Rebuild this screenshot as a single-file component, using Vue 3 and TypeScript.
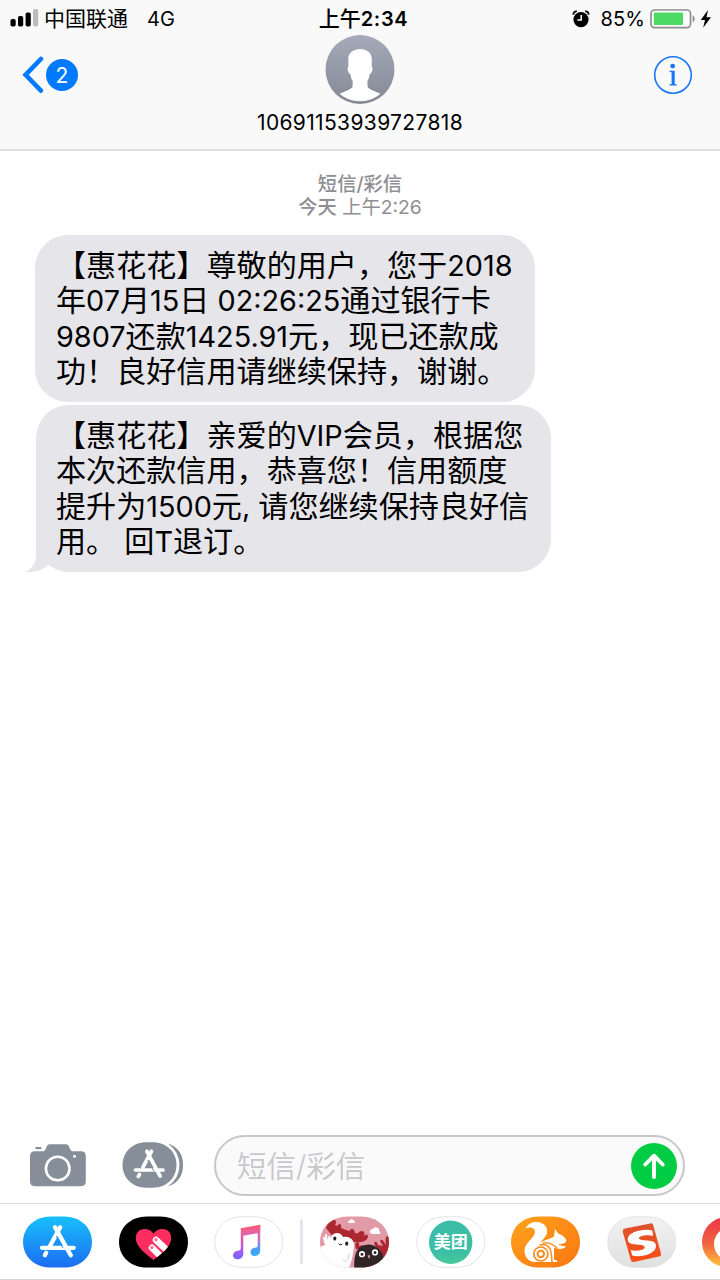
<script setup lang="ts">
interface Run { t: string; n?: boolean }
interface Message { id: number; tail: boolean; lines: Run[][] }

const messages: Message[] = [
  {
    id: 1,
    tail: false,
    lines: [
      [{ t: '【惠花花】尊敬的用户，您于' }, { t: '2018', n: true }],
      [{ t: '年' }, { t: '07', n: true }, { t: '月' }, { t: '15', n: true }, { t: '日' }, { t: ' 02:26:25', n: true }, { t: '通过银行卡' }],
      [{ t: '9807', n: true }, { t: '还款' }, { t: '1425.91', n: true }, { t: '元，现已还款成' }],
      [{ t: '功！良好信用请继续保持，谢谢。' }],
    ],
  },
  {
    id: 2,
    tail: true,
    lines: [
      [{ t: '【惠花花】亲爱的' }, { t: 'VIP', n: true }, { t: '会员，根据您' }],
      [{ t: '本次还款信用，恭喜您！信用额度' }],
      [{ t: '提升为' }, { t: '1500', n: true }, { t: '元' }, { t: ', ', n: true }, { t: '请您继续保持良好信' }],
      [{ t: '用。' }, { t: ' ', n: true }, { t: '回' }, { t: 'T', n: true }, { t: '退订。' }],
    ],
  },
]

const pill = 'M28 .4H41C58 .4 69 12 69 26S58 51.600 41 51.600H28C11 51.600 0 40 0 26S11 .4 28 .4z'
const rim = 'M28 .8H41C57.500 .8 68.700 12.500 68.700 26S57.500 51.300 41 51.300H28C12 51.300 .8 39.500 .8 26S12 .8 28 .8z'
</script>

<template>
  <main class="screen">
    <header class="header">
      <div class="status">
        <div class="status-left">
          <svg class="signal" width="29" height="18" viewBox="0 0 29 18">
            <rect x="0.5" y="10" width="5.2" height="7.5" rx="1.8" />
            <rect x="8" y="7" width="5.2" height="10.5" rx="1.8" />
            <rect x="15.6" y="3.5" width="5.2" height="14" rx="1.8" />
            <rect x="23" y="0" width="5.2" height="17.5" rx="1.8" fill="#bcbcbc" />
          </svg>
          <span class="carrier">中国联通</span>
          <span class="network">4G</span>
        </div>
        <div class="clock"><span class="clock-zh">上午</span>2:34</div>
        <div class="status-right">
          <svg width="18" height="18" viewBox="0 0 18 18">
            <circle cx="9" cy="9.6" r="7.6" />
            <path d="M1.2 4.7Q1.5 1.5 4.8 1.1M13.2 1.1Q16.5 1.5 16.8 4.7" fill="none" stroke="#000" stroke-width="1.7" />
            <path d="M9.2 5v5H5.4" fill="none" stroke="#fff" stroke-width="1.5" />
          </svg>
          <span class="percent">85%</span>
          <svg class="battery" width="46" height="20" viewBox="0 0 46 20">
            <rect x="1" y="1" width="39.5" height="17.6" rx="3.5" fill="#fff" stroke="#8e8e8e" stroke-width="1.7" />
            <rect x="3.8" y="3.6" width="29.2" height="12.4" rx="1" fill="#4cd964" />
            <path d="M42.6 6.3q2.2 1 2.2 3.5t-2.2 3.5z" fill="#8e8e8e" />
          </svg>
          <svg class="bolt" width="12" height="18" viewBox="0 0 12 18">
            <path d="M8 0 .8 10H5L3.2 17.8 11 7.2H6.5z" />
          </svg>
        </div>
      </div>
      <div class="nav">
        <div class="back">
          <svg width="23" height="38" viewBox="0 0 23 38"><path d="M18.9 3 3.6 18.800 18.9 34.600" fill="none" stroke="#007aff" stroke-width="4.600" stroke-linecap="round" stroke-linejoin="miter" /></svg>
          <span class="unread">2</span>
        </div>
        <div class="contact">
          <svg width="70" height="70" viewBox="0 0 70 70">
            <defs>
              <linearGradient id="avatar" x1="0" y1="0" x2="0" y2="1"><stop stop-color="#a4aaba" /><stop offset="1" stop-color="#858994" /></linearGradient>
              <clipPath id="avatar-clip"><circle cx="35" cy="34.5" r="31.8" /></clipPath>
            </defs>
            <circle cx="35" cy="34.5" r="34.5" fill="url(#avatar)" />
            <path clip-path="url(#avatar-clip)" fill="#fff" d="M35 14c-4 0-10 2-11.500 7.500-.5 2.500 0 8 0 10-1.500 0-1 5 .8 7 .6.7 1 0 1.300 1.700.4 2.800 1 4.300 2 5.300v6C27 54.500 18.500 56.500 13 59.500V70h44V59.500c-5.500-3-14-5-14.500-8v-6c1-1 1.600-2.500 2-5.300.3-1.700.7-1 1.300-1.700 1.800-2 2.300-7 .8-7 .2-3 .6-8-.5-11C44.800 16 39 14 35 14z" />
          </svg>
          <span class="phone">10691153939727818</span>
        </div>
        <svg class="info" width="40" height="40" viewBox="0 0 40 40">
          <circle cx="20" cy="20" r="18.3" fill="none" stroke="#1776f5" stroke-width="1.6" />
          <circle cx="19.700" cy="11.100" r="2.400" fill="#1776f5" />
          <path d="M16.600 15.700h5.100v13.200l2.100.5v1.200h-7.400v-1.200l2.200-.5V17.300l-2-.4z" fill="#1776f5" />
        </svg>
      </div>
    </header>

    <section class="thread">
      <div class="stamp">
        <div class="medium">短信/彩信</div>
        <div><span class="medium">今天</span> 上午<span>2:26</span></div>
      </div>
      <div v-for="m in messages" :key="m.id" class="bubble" :class="{ last: m.tail }">
        <div v-for="(line, i) in m.lines" :key="i" class="line"><span v-for="(r, j) in line" :key="j" :class="{ num: r.n }">{{ r.t }}</span></div>
        <svg v-if="m.tail" class="tail" width="34" height="34" viewBox="0 0 34 34">
          <path d="M11 0v17C10.500 25 7 30 0 33 9 33.300 16 32 22 27L34 10V0z" fill="#e5e5ea" />
        </svg>
      </div>
    </section>

    <section class="composer">
      <svg class="camera" width="56" height="43" viewBox="0 0 56 43">
        <path d="M5.500 3h5.800v2.200H5.500z" fill="#868e99" />
        <path d="M5 7.300h7.500c2.800 0 3-2 4-4.300C17.500.8 18.500.3 20.500.3h14.700c2 0 3 .5 4 2.700 1 2.300 1.500 4.300 4.300 4.300H51c3.300 0 4.800 1.700 4.800 4.800v25.200c0 3.200-1.500 4.900-4.800 4.900H5c-3.300 0-5-1.700-5-4.900V12.100c0-3.100 1.700-4.800 5-4.800z" fill="#868e99" />
        <circle cx="27.700" cy="24.500" r="11.800" fill="none" stroke="#fff" stroke-width="2.600" />
        <circle cx="44.500" cy="12.200" r="1.500" fill="#fff" />
      </svg>
      <svg class="drawer" width="62" height="46" viewBox="0 0 62 46">
        <path d="M24.500 .3H30.500C45 .3 54.500 10.500 54.500 23S45 45.700 30.500 45.700H24.500C10 45.700 .5 35.500 .5 23S10 .3 24.500 .3z" fill="#868e99" />
        <path d="M46 1.500C56 5 61 12 61 23S56 41 46 44.500Q57.500 36 57.500 23T46 1.500z" fill="#868e99" />
        <g stroke="#fff" stroke-width="3.700" stroke-linecap="round" fill="none"><path d="M29.500 9.300 21 25M13.500 28h27.500M17.500 32.500l-1.200 2M24.900 9.300l13.200 24.800" /></g>
        <path d="M25.800 18 32 29.500" stroke="#868e99" stroke-width="1" />
      </svg>
      <div class="field">
        <span class="placeholder">短信/彩信</span>
        <svg width="46" height="46" viewBox="0 0 46 46">
          <circle cx="23" cy="23" r="23" fill="#00cd43" />
          <path d="M23 34V13M14.300 21.500 23 12.700l8.700 8.800" fill="none" stroke="#fff" stroke-width="3.900" stroke-linecap="round" stroke-linejoin="round" />
        </svg>
      </div>
    </section>

    <nav class="apps">
      <svg class="app" viewBox="0 0 70 52">
        <defs><linearGradient id="store" x1="0" y1="0" x2="0" y2="1"><stop stop-color="#18bffb" /><stop offset="1" stop-color="#1c6df1" /></linearGradient></defs>
        <path :d="pill" fill="url(#store)" />
        <g stroke="#fff" stroke-width="4.300" stroke-linecap="round" fill="none"><path d="M37.200 11.300 26.700 30.500M19 31.800h31.700M23.200 36.800l-1.300 2.300M32 11.300l15.800 28" /></g>
        <path d="M33.300 20 40 32" stroke="#1a96f7" stroke-width="1" />
      </svg>
      <svg class="app" viewBox="0 0 70 52">
        <defs><clipPath id="heart"><path d="M34.500 44C27 38 16.800 31 16.800 22c0-10 12-12 17.700-4.500 5.700-7.500 17.700-5.500 17.700 4.500 0 9-10.200 16-17.700 22z" /></clipPath></defs>
        <path :d="pill" />
        <g clip-path="url(#heart)">
          <path d="M15 8h40v38H15z" fill="#ff2d60" />
          <path d="m37 24 14 13M33 31.700l12 12" stroke="#fff" stroke-width="6.500" stroke-linecap="round" />
          <circle cx="37" cy="23.700" r="1.800" fill="#ff7998" /><circle cx="32.800" cy="31.500" r="1.800" fill="#ff7998" />
        </g>
      </svg>
      <svg class="app" viewBox="0 0 70 52">
        <defs>
          <linearGradient id="note" x1="0" y1="0" x2="0" y2="1"><stop stop-color="#fb596e" /><stop offset=".35" stop-color="#ee5795" /><stop offset=".75" stop-color="#a45cf5" /><stop offset="1" stop-color="#7563ff" /></linearGradient>
          <linearGradient id="note2" x1="0" y1="0" x2="0" y2="1"><stop stop-color="#fb596e" /><stop offset=".4" stop-color="#d568c4" /><stop offset=".8" stop-color="#479ff5" /><stop offset="1" stop-color="#38acf5" /></linearGradient>
        </defs>
        <path class="rim" :d="rim" />
        <path d="M26.800 12.300 46.200 8.800v6.500L29.300 19v18.700c0 3.200-2.200 5.300-5.600 5.600-2.700.2-4.700-1.500-4.700-3.900 0-2.700 2-4.300 4.700-4.700 2.300-.3 3.100-.7 3.100-3z" fill="url(#note)" />
        <path d="M28 13.500 46.200 9v25.500c0 3.400-2 5.300-5.300 5.600-2.600.2-4.400-1.400-4.400-3.800 0-2.600 1.700-4.200 4.300-4.600 2.400-.3 2.900-.7 2.900-3V17.200L28 20z" fill="url(#note2)" />
      </svg>
      <span class="split"></span>
      <svg class="app" viewBox="0 0 70 52">
        <defs><clipPath id="pill"><path :d="pill" /></clipPath></defs>
        <g clip-path="url(#pill)">
          <path d="M0 0h70v52H0z" fill="#e39aa7" />
          <path d="M28 6q0-2 2-1.500 1-2.500 3-.5 2 0 1.500 1.500Q36 7 33 7h-4zM50 17q-1-4 3-4 1-3 5-1 2 1 1 3 3 2 0 3h-7z" fill="#fff" />
          <path d="M6 12Q9 3 15 4q2 2 0 5 2 2 4-1 3 0 2 4 4 2 9 3 0-3 3-2 2 2 2 4 3 1 4-1 3-2 5 0 1 2 0 4 3-3 4 0 0 5-7 6-8 1-14-2-6-3-9-2-6-1-8-5z" fill="#ad2731" />
          <path d="M36 33q-2-6 1-7 3 0 2 4l4-1q2 2-1 4M56 31q-3-4-1-5 2-1 3 3l5 1-3-5q2-3 4 1l2 3q-1-6 0-8 2-2 4 1v22l-8-4q-1-5-6-9z" fill="#ad2731" />
          <path d="M0 52V31l5-2-2-7q0-2 1.500-1l1 3-.5-5q1-2 2 0l.5 5q1-5 2.500-4 1 3 0 5 1-8 7-8 4 0 6 4 4-1 7 1 4 2 4 8-1 12-5 22z" fill="#fff" />
          <path d="M34.300 52q-1-17 7-21.500 9-5 17 2Q66 40 64 52z" fill="#302426" />
          <ellipse cx="14.800" cy="22.600" rx="1.600" ry="2.100" fill="#282022" /><ellipse cx="26.700" cy="27.700" rx="1.600" ry="2.100" fill="#282022" />
          <path d="M18.500 27.500q1 2 3.500 1" fill="none" stroke="#282022" stroke-width="1" />
          <path d="M23.500 43q1 4 4 1l2-7" fill="none" stroke="#d8ced1" stroke-width="1" />
          <g fill="#302426" stroke="#fff" stroke-width="1.600"><circle cx="42" cy="38.200" r="2.300" /><circle cx="55" cy="36.400" r="2.300" /></g>
          <path d="m47.500 39.500 2.500-.3-.7 3.800z" fill="#d8b8bd" />
        </g>
      </svg>
      <svg class="app" viewBox="0 0 70 52">
        <defs><linearGradient id="meituan" x1="0" y1="0" x2="0" y2="1"><stop offset=".7" stop-color="#3cbda6" /><stop offset="1" stop-color="#45cc9a" /></linearGradient></defs>
        <path class="rim" :d="rim" />
        <circle cx="34.700" cy="26.300" r="21.700" fill="url(#meituan)" />
        <text class="brand" x="34.700" y="32" text-anchor="middle">美团</text>
      </svg>
      <svg class="app" viewBox="0 0 70 52">
        <defs><linearGradient id="uc" x1="0" y1="0" x2="1" y2="1"><stop stop-color="#ffa31c" /><stop offset="1" stop-color="#fb7611" /></linearGradient></defs>
        <path :d="pill" fill="url(#uc)" />
        <path d="M14.500 12.500C17 7.500 21 6 25.500 6 33 6 37 11 36 17c-.7 4-4.500 6-6.500 10 4-3.500 9-3.500 13.500-6.500l1-7.500 3.200 4.500c4.500 1.500 7 4 8.300 7-1 3-4 3.800-8.500 3.500 2.500 1.500 5 2.300 8 2-3 4.500-8 3-12 1.500v11.300c0 2.200 3 .5 3.500 3.200H24c-7 0-10.700-6-10.500-11.500.3-8.500 10-12 10.500-18.500.3-4-5-6-9.500-3.500z" fill="#fff" />
        <g fill="none" stroke="#fd8917"><circle cx="29.800" cy="38" r="7" stroke-width="1.600" /><circle cx="29.800" cy="38" r="3.200" stroke-width="2" /><path d="M28.500 29q8-2 11 5 1.500 6 1.500 12M32 27q8-1 14 5" stroke-width="1.400" /></g>
      </svg>
      <svg class="app" viewBox="0 0 70 52">
        <defs><linearGradient id="silver" x1="0" y1="0" x2="0" y2="1"><stop stop-color="#f2f2f2" /><stop offset="1" stop-color="#e0e0e0" /></linearGradient><linearGradient id="sogou" x1="0" y1="0" x2="0" y2="1"><stop stop-color="#dd522e" /><stop offset="1" stop-color="#fb4e16" /></linearGradient></defs>
        <path :d="rim" fill="url(#silver)" stroke="#dedede" stroke-width=".8" />
        <path d="M18 12.500 43.500 7.400q2.200-.4 2.700 1.800L54 37.500q.5 2.500-2 3L27 46q-2.500.4-3.200-2L15.800 16q-.5-2.700 2.200-3.500z" fill="url(#sogou)" />
        <path d="M45.500 14.500c-8-2.500-25 1-24.800 9 .3 7.500 15.500 3.500 17 7.300.8 3.700-9.500 5-14 3l1.500 5.700c8 2.200 24.300-1 23.800-10-.4-7.500-15.500-3.500-17-7-.8-3 9.500-4.300 14-2.500z" fill="#fff" />
      </svg>
      <svg class="app" viewBox="0 0 70 52">
        <defs><linearGradient id="warm" x1="0" y1="0" x2="0" y2="1"><stop stop-color="#ea3448" /><stop offset=".55" stop-color="#f2663f" /><stop offset="1" stop-color="#ffc83d" /></linearGradient></defs>
        <path :d="pill" fill="url(#warm)" />
        <circle cx="29" cy="28" r="17" fill="#fff" />
      </svg>
    </nav>
  </main>
</template>

<style>
html, body { margin: 0; overflow: hidden; }
</style>

<style scoped>
.screen {
  width: 720px; height: 1280px; overflow: hidden; box-sizing: border-box;
  display: flex; flex-direction: column; background: #fff; color: #000;
  font-family: Inter, "Noto Sans CJK SC", sans-serif;
}
svg { display: block; flex: none; }
.header { height: 151px; box-sizing: border-box; background: #f9f9f9; border-bottom: 2px solid #e0e0e0; flex: none; }
.status { height: 36px; display: grid; grid-template-columns: 1fr auto 1fr; align-items: center; font-size: 20px; line-height: 36px; padding: 0 8px 0 10px; }
.status-left, .status-right { display: flex; align-items: center; }
.signal { margin-top: -1px; }
.carrier, .network, .clock, .percent { padding-top: 1px; }
.carrier { margin-left: 5px; font-size: 21px; }
.network { margin-left: 19px; }
.clock { font-weight: 600; letter-spacing: .7px; padding-left: 5px; }
.clock-zh { font-weight: 500; font-size: 21px; letter-spacing: 0; }
.status-right { justify-content: flex-end; }
.percent { margin: 0 5px 0 11px; letter-spacing: .1px; }
.bolt { margin-left: 4px; }
.nav { height: 113px; display: grid; grid-template-columns: 1fr auto 1fr; align-items: start; }
.back { display: flex; align-items: center; padding: 20px 0 0 22px; }
.unread { width: 32px; height: 32px; line-height: 33px; border-radius: 50%; margin-left: 1px; background: #007aff; color: #fff; font-size: 21px; text-align: center; }
.contact { display: flex; flex-direction: column; align-items: center; margin-top: -1px; }
.phone { font-size: 21px; line-height: 30px; margin-top: 3px; letter-spacing: .35px; }
.info { justify-self: end; margin: 19px 27px 0 0; }
.thread { flex: 1; padding: 22px 0 0 35px; }
.stamp { margin: 0 0 16px -35px; text-align: center; color: #8e8e93; font-size: 19.3px; line-height: 23px; }
.medium { font-weight: 500; }
.bubble { position: relative; width: 500px; height: 167px; box-sizing: border-box; padding: 12.500px 0 0 21px; background: #e5e5ea; border-radius: 33px; font-size: 30.1px; }
.bubble.last { width: 515px; margin: 3px 0 0 1px; padding: 12.500px 0 0 20px; }
.line { height: 35.5px; line-height: 35.5px; white-space: pre; }
.num { font-size: 28.8px; }
.tail { position: absolute; left: -11px; bottom: -1px; }
.composer { height: 75px; display: flex; align-items: flex-start; flex: none; }
.camera { margin: 16px 0 0 30px; }
.drawer { margin: 14px 0 0 36px; }
.field { margin: 7px 0 0 30px; width: 471px; height: 61px; box-sizing: border-box; border: 2px solid #c7c7cc; border-radius: 31px; background: #fafafa; display: flex; align-items: center; justify-content: space-between; padding: 0 6px 0 21px; }
.placeholder { font-size: 29.500px; color: #c7c7cc; line-height: 57px; font-weight: 350; padding-top: 2px; }
.apps { height: 77px; box-sizing: border-box; border-top: 1px solid #dcdcdf; border-bottom: 1px solid #d6d6d6; display: flex; align-items: center; padding-left: 23px; gap: 25.6px; flex: none; }
.app { width: 70px; height: 52px; }
.rim { fill: #fff; stroke: #e3e3e5; stroke-width: 1; }
.split { width: 3px; height: 45px; border-radius: 2px; background: #e5e5ee; flex: none; margin: 0 -8.800px 0 -9.500px; }
.brand { font: 700 17px "Noto Sans CJK SC", sans-serif; fill: #fff; }
</style>
